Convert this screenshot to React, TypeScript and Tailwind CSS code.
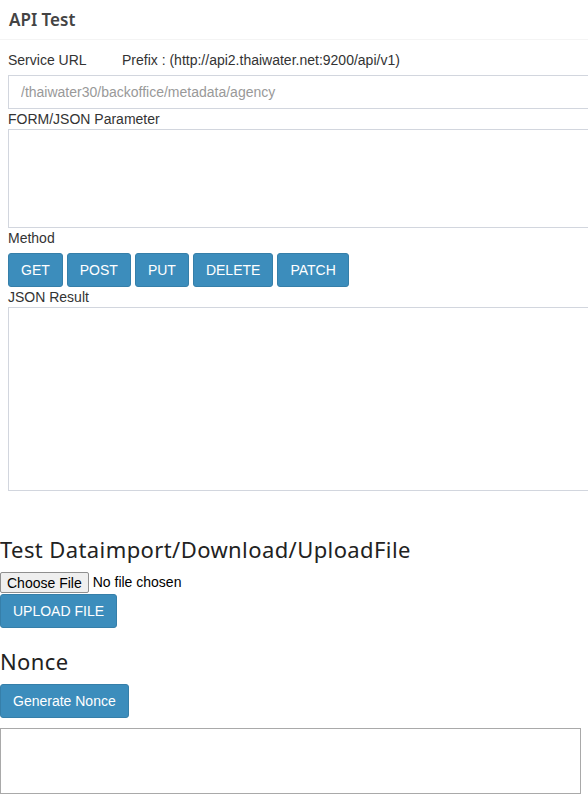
import React from 'react';

const methods = ['GET', 'POST', 'PUT', 'DELETE', 'PATCH'];

function BlueButton({ children }: { children: React.ReactNode }) {
  return (
    <button
      type="button"
      className="h-[34px] px-3 rounded-[3px] border border-[#367fa9] bg-[#3c8dbc] text-white text-[14px] leading-5 whitespace-nowrap"
    >
      {children}
    </button>
  );
}

export default function App() {
  return (
    <div className="w-full overflow-hidden bg-white text-[14px] text-[#333] font-['Liberation_Sans',Arial,sans-serif]">
      {/* API Test panel */}
      <div className="w-[640px]">
        <div className="h-[40px] flex items-center px-[9px] border-b border-[#f4f4f4]">
          <h3 className="font-['Noto_Sans',sans-serif] font-semibold text-[17px] leading-6 text-[#444]">
            API Test
          </h3>
        </div>
        <div className="px-2 pt-[10px]">
          <div className="flex h-5 items-center leading-5">
            <span className="w-[114px]">Service URL</span>
            <span>Prefix : (http://api2.thaiwater.net:9200/api/v1)</span>
          </div>
          <input
            type="text"
            placeholder="/thaiwater30/backoffice/metadata/agency"
            className="mt-[5px] block h-[34px] w-full border border-[#d2d6de] px-3 text-[14px] placeholder:text-[#999] outline-none"
          />
          <div className="leading-5">FORM/JSON Parameter</div>
          <textarea className="block h-[99px] w-full resize-none border border-[#d2d6de] outline-none" />
          <div className="leading-5">Method</div>
          <div className="mt-[5px] flex gap-1">
            {methods.map((m) => (
              <BlueButton key={m}>{m}</BlueButton>
            ))}
          </div>
          <div className="leading-5">JSON Result</div>
          <textarea className="block h-[184px] w-full resize-none border border-[#d2d6de] outline-none" />
        </div>
      </div>

      {/* Upload section */}
      <h2 className="mt-[45px] font-['Noto_Sans',sans-serif] text-[22px] leading-[26px] tracking-[0.4px] text-[#222]">
        Test Dataimport/Download/UploadFile
      </h2>
      <div className="mt-[10px] flex h-[21px] items-center">
        <button
          type="button"
          className="h-[21px] px-[6px] border border-[#8f8f8f] rounded-[2px] bg-[#efefef] text-[14px] leading-none text-black"
        >
          Choose File
        </button>
        <span className="ml-1 text-black">No file chosen</span>
      </div>
      <div className="mt-px">
        <BlueButton>UPLOAD FILE</BlueButton>
      </div>

      {/* Nonce */}
      <h2 className="mt-[20px] font-['Noto_Sans',sans-serif] text-[22px] leading-[26px] tracking-[0.4px] text-[#222]">
        Nonce
      </h2>
      <div className="mt-[10px]">
        <BlueButton>Generate Nonce</BlueButton>
      </div>
      <textarea className="mt-[10px] block h-[66px] w-[581px] resize-none border border-[#a9a9a9] outline-none" />
    </div>
  );
}
